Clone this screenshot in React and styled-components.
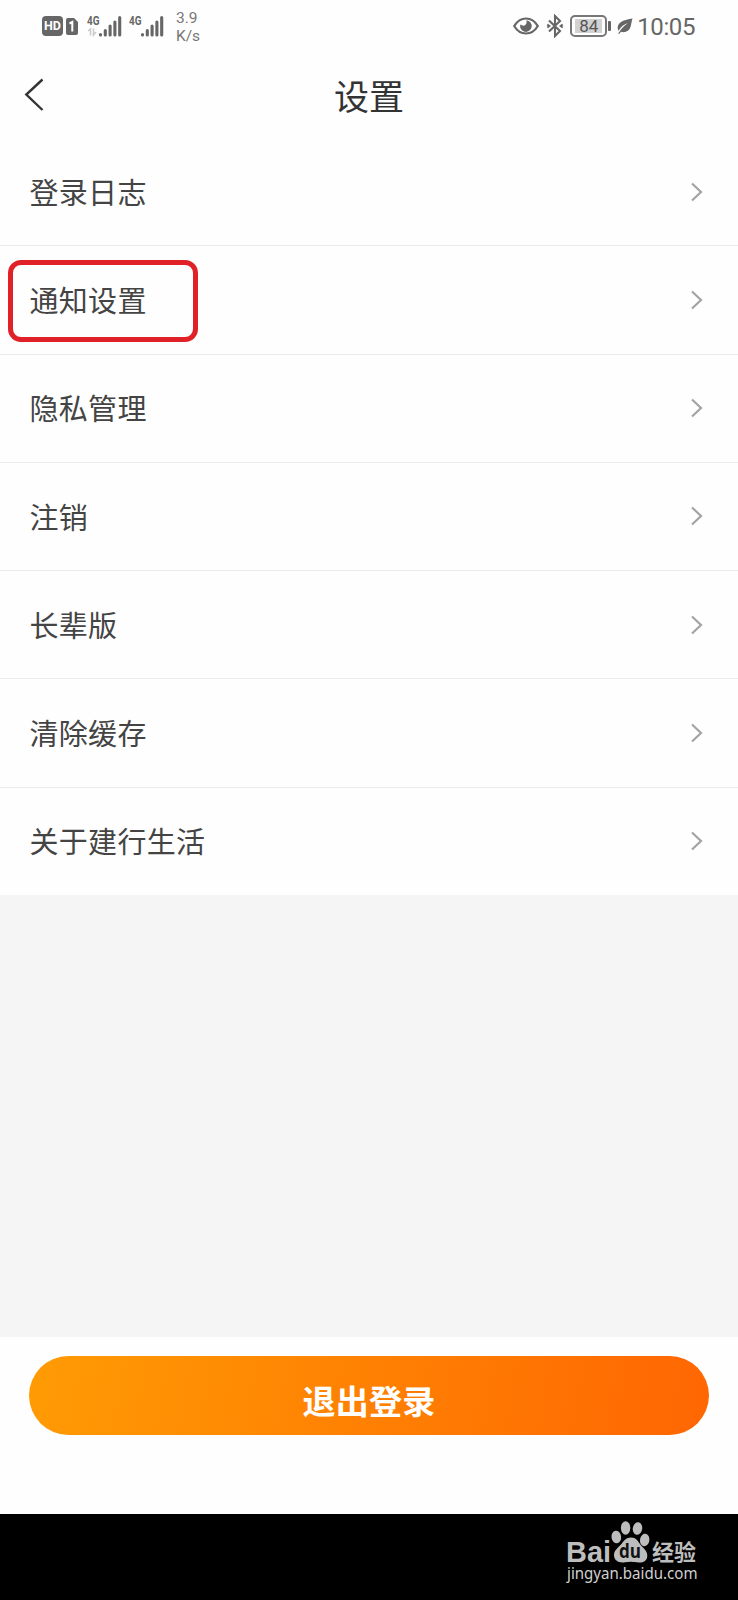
import React from 'react';
import styled, { createGlobalStyle } from 'styled-components';

const items = [
  { id: 1, title: '登录日志' },
  { id: 2, title: '通知设置', marked: true },
  { id: 3, title: '隐私管理' },
  { id: 4, title: '注销' },
  { id: 5, title: '长辈版' },
  { id: 6, title: '清除缓存' },
  { id: 7, title: '关于建行生活' },
];

const Signal = ({ data }) => (
  <svg width="36" height="24" viewBox="0 0 36 24">
    <text
      x="0"
      y="11"
      fontSize="12.5"
      fontWeight="700"
      fontFamily="Roboto, sans-serif"
      textLength="12.5"
      lengthAdjust="spacingAndGlyphs"
      fill="#666"
    >
      4G
    </text>
    {data && (
      <path
        d="M1 17l2.500-2v6.500M6.500 14.500v6.500l2.500-3"
        fill="none"
        stroke="#ccc"
        strokeWidth="1.6"
      />
    )}
    <path
      d="M13.500 20.500v.5M18.300 16.500v4.500M23.100 12v9M27.900 8v13M32.700 3.500v17.500"
      stroke="#666"
      strokeWidth="3.1"
      strokeLinecap="round"
    />
  </svg>
);

const StatusBar = () => (
  <Status>
    <HdBadge>HD</HdBadge>
    <SimIcon width="12" height="17" viewBox="0 0 12 17">
      <path
        d="M2 0h6l4 4v11a2 2 0 0 1-2 2H2a2 2 0 0 1-2-2V2a2 2 0 0 1 2-2z"
        fill="#666"
      />
      <path d="M3.5 5.5L6.3 4v9.5" fill="none" stroke="#fff" strokeWidth="2" />
    </SimIcon>
    <Signals>
      <Signal data />
      <Signal />
    </Signals>
    <Speed>
      <span>3.9</span>
      <span>K/s</span>
    </Speed>
    <StatusRight>
      <svg width="26" height="18" viewBox="0 0 26 18">
        <path
          d="M1.200 9C4 4.300 8 1.500 13 1.500S22 4.300 24.800 9C22 13.700 18 16.500 13 16.500S4 13.700 1.200 9z"
          fill="none"
          stroke="#666"
          strokeWidth="2.2"
        />
        <path
          d="M13.500 3.300a5.800 5.800 0 1 1-6.200 4.200q3.500 2.200 5.200.2T13.500 3.300z"
          fill="#666"
        />
      </svg>
      <BluetoothIcon width="18" height="24" viewBox="0 0 18 24">
        <path
          d="M3 6.500l11 10.500-5 5V2l5 5L3 17.500"
          fill="none"
          stroke="#666"
          strokeWidth="2.1"
        />
        <path
          d="M1.300 10.500l2 1.500-2 1.500M16.700 10.500l-2 1.500 2 1.500"
          fill="none"
          stroke="#666"
          strokeWidth="2"
        />
      </BluetoothIcon>
      <Battery>
        <Level>84</Level>
      </Battery>
      <BatteryTip />
      <LeafIcon width="16" height="16" viewBox="0 0 16 16">
        <path
          d="M15.500.5C7 1.500.500 4.500.700 10c0 1 .3 2 .8 2.700C4 8.500 7 6.500 11 5 7.500 7.500 4.500 10 1.200 15.700l1.400.1 1.300-2c4.600 1.300 8.300-.8 9.600-4.800C14.400 6.200 14.500 3 15.500.5z"
          fill="#666"
        />
      </LeafIcon>
      <Time>10:05</Time>
    </StatusRight>
  </Status>
);

const Watermark = () => (
  <svg width="136" height="66" viewBox="0 0 136 66">
    <g fill="#bdbdbd">
      <text
        x="0"
        y="40.5"
        fontSize="30"
        fontWeight="700"
        fontFamily="Liberation Sans, sans-serif"
        textLength="45"
        lengthAdjust="spacingAndGlyphs"
      >
        Bai
      </text>
      <ellipse cx="50.300" cy="16" rx="4.800" ry="6.300" transform="rotate(-8 50.300 16)" />
      <ellipse cx="59.600" cy="7" rx="4.700" ry="6.700" />
      <ellipse cx="71.500" cy="7.500" rx="4.700" ry="6.300" transform="rotate(10 71.500 7.500)" />
      <ellipse cx="78.700" cy="19" rx="4.700" ry="6.300" transform="rotate(8 78.700 19)" />
      <path d="M65 16.500c6 0 7.500 5 11 9 3.500 3.500 6 6.500 5.200 10.500-1 5-5.200 6-10.200 5.200-4-.7-8-.7-12 0-6 1-10.700-1.500-11-6.700C47.800 30 51 27.500 54.500 24S59 16.500 65 16.500z" />
      <text
        x="86"
        y="38.500"
        fontSize="22"
        fontWeight="700"
        fontFamily="Noto Sans CJK SC, sans-serif"
        textLength="44"
      >
        经验
      </text>
    </g>
    <text
      x="53"
      y="37"
      fontSize="19"
      fontWeight="700"
      fontFamily="Open Sans, sans-serif"
      textLength="22"
      lengthAdjust="spacingAndGlyphs"
      fill="#111"
    >
      du
    </text>
    <text
      x="1"
      y="58"
      fontSize="15.500"
      fontFamily="Noto Sans, sans-serif"
      textLength="130.500"
      lengthAdjust="spacingAndGlyphs"
      fill="#d0d0d0"
    >
      jingyan.baidu.com
    </text>
  </svg>
);

const App = () => {
  return (
    <Page>
      <GlobalStyle />
      <StatusBar />
      <Header>
        <BackBtn aria-label="返回">
          <svg width="20" height="34" viewBox="0 0 20 34">
            <path
              d="M18.500 1.500L2.300 16.500l16.200 15.500"
              fill="none"
              stroke="#333"
              strokeWidth="2.400"
            />
          </svg>
        </BackBtn>
        <Title>设置</Title>
      </Header>
      <List>
        {items.map(item => (
          <Item key={item.id}>
            <Label>{item.title}</Label>
            <svg width="12" height="20" viewBox="0 0 12 20">
              <path
                d="M1 1.500L10 10l-9 8.500"
                fill="none"
                stroke="#a3a3a3"
                strokeWidth="2.2"
              />
            </svg>
            {item.marked && <Mark />}
          </Item>
        ))}
      </List>
      <Footer>
        <LogoutBtn>退出登录</LogoutBtn>
      </Footer>
      <BottomBar>
        <Watermark />
      </BottomBar>
    </Page>
  );
};

const GlobalStyle = createGlobalStyle`
  * {
    box-sizing: border-box;
  }
  body {
    margin: 0;
    font-family: 'Noto Sans CJK SC', sans-serif;
  }
  svg {
    display: block;
    flex-shrink: 0;
  }
`;

const Page = styled.div`
  display: flex;
  flex-direction: column;
  width: 738px;
  height: 1600px;
  background-color: #f5f5f5;
`;

const Status = styled.div`
  display: flex;
  align-items: center;
  height: 52px;
  padding: 0 43px 0 42px;
  background-color: #fefefe;
  color: #666;
  font-family: Roboto, sans-serif;
`;

const HdBadge = styled.div`
  width: 21px;
  height: 20px;
  border-radius: 4px;
  background-color: #666;
  color: #fff;
  font-size: 12.5px;
  font-weight: bold;
  line-height: 20px;
  text-align: center;
`;

const SimIcon = styled.svg`
  margin-left: 3px;
`;

const Signals = styled.div`
  display: flex;
  gap: 6px;
  margin-left: 9px;
`;

const Speed = styled.div`
  display: flex;
  flex-direction: column;
  margin-left: 11px;
  padding-top: 1px;
  font-size: 15.5px;
  line-height: 18px;
  color: #777;
`;

const StatusRight = styled.div`
  display: flex;
  align-items: center;
  margin-left: auto;
`;

const BluetoothIcon = styled.svg`
  margin-left: 7px;
`;

const Battery = styled.div`
  width: 37px;
  height: 22px;
  margin-left: 6px;
  padding: 2px;
  border: 2px solid #777;
  border-radius: 5px;
`;

const Level = styled.div`
  width: 27px;
  height: 14px;
  margin-left: 1px;
  background-color: #d2d2d2;
  color: #555;
  font-size: 17px;
  line-height: 15px;
  text-align: center;
`;

const BatteryTip = styled.div`
  width: 3px;
  height: 10px;
  margin-left: 1px;
  border-radius: 1px;
  background-color: #666;
`;

const LeafIcon = styled.svg`
  margin-left: 6px;
`;

const Time = styled.div`
  margin-left: 4px;
  padding-top: 2px;
  font-size: 24px;
  line-height: 30px;
  letter-spacing: -0.4px;
`;

const Header = styled.div`
  display: grid;
  grid-template-columns: 60px 1fr 60px;
  align-items: center;
  height: 86px;
  background-color: #fefefe;
`;

const BackBtn = styled.button`
  padding: 0 0 0 23.5px;
  border: none;
  background: none;
  cursor: pointer;
`;

const Title = styled.div`
  padding-bottom: 1px;
  color: #333;
  font-size: 35px;
  line-height: 50px;
  text-align: center;
`;

const List = styled.div`
  flex: 1;
`;

const Item = styled.div`
  position: relative;
  display: flex;
  align-items: center;
  justify-content: space-between;
  height: 108.25px;
  padding: 0 35px 0 29.5px;
  border-bottom: 1px solid #ececec;
  background-color: #fefefe;

  &:last-child {
    border-bottom-color: #f5f5f5;
  }
`;

const Label = styled.div`
  padding-bottom: 1.5px;
  color: #444;
  font-size: 29px;
  line-height: 44px;
  letter-spacing: 0.3px;
`;

/* red frame around the highlighted entry */
const Mark = styled.div`
  position: absolute;
  top: 14px;
  left: 8px;
  width: 190px;
  height: 82px;
  border: 5px solid #e02128;
  border-radius: 13px;
`;

const Footer = styled.div`
  height: 177px;
  padding: 19px 29px 0;
  background-color: #fefefe;
`;

const LogoutBtn = styled.button`
  display: block;
  width: 100%;
  height: 79px;
  padding: 8px 0 0;
  border: none;
  border-radius: 40px;
  background: linear-gradient(100deg, #ff9b04, #ff6602);
  color: #fff;
  font-family: inherit;
  font-size: 33px;
  font-weight: bold;
  line-height: 48px;
  letter-spacing: 0.3px;
  cursor: pointer;
`;

const BottomBar = styled.div`
  display: flex;
  justify-content: flex-end;
  height: 86px;
  padding: 7px 36px 0 0;
  background-color: #000;
`;

export default App;
